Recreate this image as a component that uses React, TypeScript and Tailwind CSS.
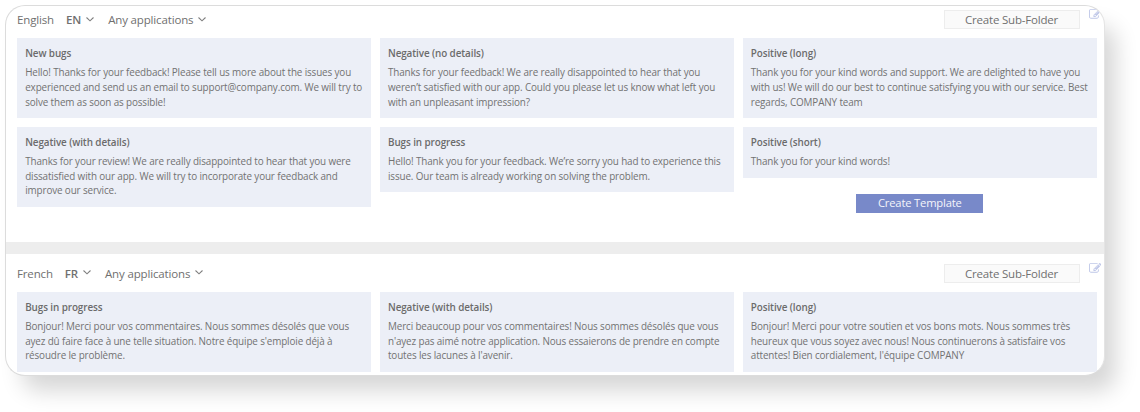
import React from 'react';

interface Template {
    title: string;
    text: string;
}

interface Folder {
    language: string;
    code: string;
    columns: Template[][];
    canCreate?: boolean;
}

const folders: Folder[] = [
    {
        language: 'English',
        code: 'EN',
        canCreate: true,
        columns: [
            [
                {
                    title: 'New bugs',
                    text: 'Hello! Thanks for your feedback! Please tell us more about the issues you\nexperienced and send us an email to support@company.com. We will try to\nsolve them as soon as possible!',
                },
                {
                    title: 'Negative (with details)',
                    text: 'Thanks for your review! We are really disappointed to hear that you were\ndissatisfied with our app. We will try to incorporate your feedback and\nimprove our service.',
                },
            ],
            [
                {
                    title: 'Negative (no details)',
                    text: 'Thanks for your feedback! We are really disappointed to hear that you\nweren’t satisfied with our app. Could you please let us know what left you\nwith an unpleasant impression?',
                },
                {
                    title: 'Bugs in progress',
                    text: 'Hello! Thank you for your feedback. We’re sorry you had to experience this\nissue. Our team is already working on solving the problem.',
                },
            ],
            [
                {
                    title: 'Positive (long)',
                    text: 'Thank you for your kind words and support. We are delighted to have you\nwith us! We will do our best to continue satisfying you with our service. Best\nregards, COMPANY team',
                },
                { title: 'Positive (short)', text: 'Thank you for your kind words!' },
            ],
        ],
    },
    {
        language: 'French',
        code: 'FR',
        columns: [
            [
                {
                    title: 'Bugs in progress',
                    text: 'Bonjour! Merci pour vos commentaires. Nous sommes désolés que vous\nayez dû faire face à une telle situation. Notre équipe s\'emploie déjà à\nrésoudre le problème.',
                },
            ],
            [
                {
                    title: 'Negative (with details)',
                    text: 'Merci beaucoup pour vos commentaires! Nous sommes désolés que vous\nn\'ayez pas aimé notre application. Nous essaierons de prendre en compte\ntoutes les lacunes à l\'avenir.',
                },
            ],
            [
                {
                    title: 'Positive (long)',
                    text: 'Bonjour! Merci pour votre soutien et vos bons mots. Nous sommes très\nheureux que vous soyez avec nous! Nous continuerons à satisfaire vos\nattentes! Bien cordialement, l\'équipe COMPANY',
                },
            ],
        ],
    },
];

const Caret: React.FC = () => (
    <svg viewBox="0 0 8 5" className="w-2 h-[5px] shrink-0 -mt-px" fill="none" stroke="#808080" strokeWidth="1.1">
        <path d="M0.5 0.5L4 3.8L7.5 0.5" />
    </svg>
);

const EditIcon: React.FC = () => (
    <svg viewBox="0 0 1792 1792" className="w-[12.5px] h-[12.5px]" fill="#bfc7e8">
        <path d="M888 1184l116-116-152-152-116 116v56h96v96h56zm440-720q-16-16-33 1l-350 350q-17 17-1 33t33-1l350-350q17-17 1-33zm80 594v190q0 119-84.5 203.5t-203.5 84.5h-832q-119 0-203.5-84.5t-84.5-203.5v-832q0-119 84.5-203.5t203.5-84.5h832q63 0 117 25 15 7 18 23 3 17-9 29l-49 49q-14 14-32 8-23-6-45-6h-832q-66 0-113 47t-47 113v832q0 66 47 113t113 47h832q66 0 113-47t47-113v-126q0-13 9-22l64-64q15-15 35-7t20 29zm-96-738l288 288-672 672h-288v-288zm444 132l-92 92-288-288 92-92q28-28 68-28t68 28l152 152q28 28 28 68t-28 68z" />
    </svg>
);

const TemplateCard: React.FC<{ template: Template }> = ({ template }) => (
    <div className="bg-[#eceff7] px-[8.2px] pt-[8px] pb-[9px]">
        <h3 className="text-[9.9px] leading-[15px] tracking-[-0.09px] font-semibold text-[#6b6b6b] mb-1">{template.title}</h3>
        <p className="text-[9.9px] leading-[14.8px] tracking-[-0.13px] text-[#727272] whitespace-pre">{template.text}</p>
    </div>
);

const FolderHeader: React.FC<{ folder: Folder }> = ({ folder }) => (
    <div className="flex h-[19px] text-[11.5px] tracking-[-0.15px] text-[#707070]">
        <div className="flex items-center">
            <span>{folder.language}</span>
            <button className="flex items-center gap-[5px] ml-3">
                <span className="font-semibold">{folder.code}</span>
                <Caret />
            </button>
            <button className="flex items-center gap-[5px] ml-[14px]">
                <span>Any applications</span>
                <Caret />
            </button>
        </div>
        <button className="ml-auto w-[136px] h-[19px] flex items-center justify-center bg-[#fafafa] border border-[#ededed] tracking-[-0.2px]">
            Create Sub-Folder
        </button>
        <button className="ml-[9px] mr-[3px] -mt-[2px] h-[13px]" title="Edit">
            <EditIcon />
        </button>
    </div>
);

const App: React.FC = () => {
    return (
        <div className="w-[1140px] h-[412px] bg-white overflow-hidden pt-[5px] pl-[5px] font-['Open_Sans',sans-serif]">
            <div className="w-[1100px] h-[371px] rounded-[20px] border border-[#dcdcdc] border-r-[#e4e4e4] bg-white overflow-hidden shadow-[14px_18px_22px_-3px_rgba(0,0,0,0.16)]">
                {folders.map(folder => (
                    <section
                        key={folder.code}
                        className="h-[248.3px] pt-1 pl-[11px] not-first:pt-[9.5px] first:border-b-[12.5px] border-[#ededed]"
                    >
                        <FolderHeader folder={folder} />
                        <div className="grid grid-cols-3 gap-x-[8.4px] items-start mt-[9px] w-[1080px]">
                            {folder.columns.map((column, i) => (
                                <div key={i} className="flex flex-col gap-[8.4px]">
                                    {column.map(template => (
                                        <TemplateCard key={template.title} template={template} />
                                    ))}
                                    {folder.canCreate && i === 2 && (
                                        <button className="mt-2 h-[19px] w-[127px] self-center flex items-center justify-center bg-[#7889c9] text-[11.2px] tracking-[-0.17px] text-[#f4f5fb]">
                                            Create Template
                                        </button>
                                    )}
                                </div>
                            ))}
                        </div>
                    </section>
                ))}
            </div>
        </div>
    );
};

export default App;
